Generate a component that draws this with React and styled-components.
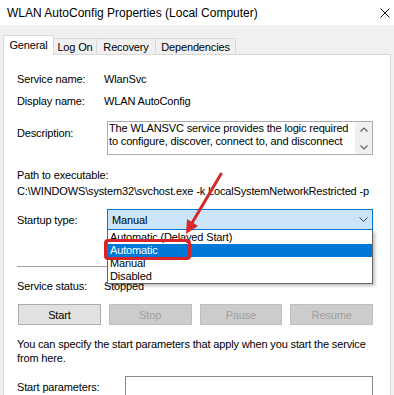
import React from "react";
import styled, { createGlobalStyle } from "styled-components";

const Global = createGlobalStyle`
  html, body { margin: 0; padding: 0; background: #f0f0f0; }
  body { font-family: "Liberation Sans", Arial, sans-serif; color: #000; }
  * { box-sizing: border-box; }
`;

const Window = styled.div`
  width: 394px;
  height: 395px;
  overflow: hidden;
  background: #f0f0f0;
  display: flex;
  flex-direction: column;
  font-size: 11px;
  letter-spacing: -0.15px;
`;

const TitleBar = styled.div`
  height: 25px;
  flex: none;
  background: #fff;
  display: flex;
  align-items: center;
  justify-content: space-between;
  padding: 0 4px 0 7px;
  font-size: 12px;
  letter-spacing: 0;
`;

const CloseBtn = styled.div`
  width: 10px;
  height: 10px;
  display: flex;
`;

const Body = styled.div`
  flex: 1;
  display: flex;
  flex-direction: column;
  padding: 10px 3px 0 3px;
`;

const TabRow = styled.div`
  display: flex;
  align-items: flex-end;
  height: 20px;
  flex: none;
`;

const Tab = styled.div`
  width: ${(p) => p.$w}px;
  height: ${(p) => (p.$active ? 20 : 16)}px;
  margin-bottom: ${(p) => (p.$active ? 0 : 1)}px;
  margin-left: ${(p) => (p.$first ? 0 : -1)}px;
  background: ${(p) => (p.$active ? "#fff" : "#f0f0f0")};
  border: 1px solid #d9d9d9;
  border-bottom: none;
  position: relative;
  z-index: ${(p) => (p.$active ? 2 : 0)};
  display: flex;
  align-items: center;
  justify-content: center;
  padding-bottom: ${(p) => (p.$active ? 2 : 0)}px;
`;

const Panel = styled.div`
  flex: 1;
  margin-top: -1px;
  background: #fff;
  border: 1px solid #d9d9d9;
  border-bottom: none;
  padding: 16px 17px 0 13px;
  display: flex;
  flex-direction: column;
`;

const Row = styled.div`
  display: flex;
  align-items: ${(p) => (p.$top ? "flex-start" : "center")};
  margin-top: ${(p) => p.$mt || 0}px;
  line-height: 16px;
`;

const Label = styled.div`
  width: ${(p) => p.$w || 87}px;
  flex: none;
  padding-top: ${(p) => p.$pt || 0}px;
`;

const Text = styled.div`
  line-height: 16px;
  margin-top: ${(p) => p.$mt || 0}px;
  white-space: nowrap;
`;

const DescBox = styled.div`
  margin-left: 3px;
  flex: 1;
  height: 34px;
  border: 1px solid #abadb3;
  display: flex;
  line-height: 13px;
`;

const DescText = styled.div`
  flex: 1;
  padding: 0 1px;
  overflow: hidden;
  white-space: nowrap;
`;

const ScrollBar = styled.div`
  width: 17px;
  background: #f0f0f0;
  display: flex;
  flex-direction: column;
  align-items: center;
  justify-content: space-between;
  padding: 5px 0 4px;
`;

const SelectWrap = styled.div`
  margin-left: 3px;
  flex: 1;
  position: relative;
  height: 21px;
`;

const Select = styled.div`
  height: 21px;
  border: 1px solid #0078d7;
  background: #cce4f7;
  display: flex;
  align-items: center;
  justify-content: space-between;
  padding: 0 4px;
`;

const List = styled.div`
  position: absolute;
  top: 100%;
  left: 0;
  right: 0;
  background: #fff;
  border: 1px solid #646464;
  border-top: none;
  padding-top: 1px;
  box-shadow: 2px 2px 3px rgba(0, 0, 0, 0.25);
  z-index: 3;
`;

const Item = styled.div`
  height: 13px;
  line-height: 13px;
  padding-left: 2px;
  background: ${(p) => (p.$sel ? "#0078d7" : "transparent")};
  color: ${(p) => (p.$sel ? "#fff" : "#000")};
  white-space: nowrap;
`;

const Highlight = styled.div`
  position: absolute;
  left: -3px;
  top: 30px;
  width: 87px;
  height: 21px;
  border: 3px solid #d8232a;
  border-radius: 4px;
  z-index: 4;
`;

const Arrow = styled.svg`
  position: absolute;
  left: 43px;
  top: -44px;
  width: 80px;
  height: 80px;
  z-index: 5;
  overflow: visible;
`;

const Separator = styled.div`
  height: 1px;
  background: #a0a0a0;
  margin-top: 36px;
`;

const ButtonRow = styled.div`
  display: flex;
  gap: 8px;
  margin-top: 10px;
  margin-left: 1px;
`;

const Button = styled.div`
  flex: 1;
  height: 21px;
  display: flex;
  align-items: center;
  justify-content: center;
  border: 1px solid ${(p) => (p.$disabled ? "#bfbfbf" : "#adadad")};
  background: ${(p) => (p.$disabled ? "#cccccc" : "#e1e1e1")};
  color: ${(p) => (p.$disabled ? "#a0a0a0" : "#000")};
`;

const Paragraph = styled.div`
  margin-top: 12px;
  line-height: 14px;
`;

const Input = styled.div`
  flex: 1;
  height: 28px;
  border: 1px solid #8a8a8a;
  align-self: flex-start;
`;

const Chevron = ({ up }) => (
  <svg width="8" height="5" viewBox="0 0 8 5">
    <path
      d={up ? "M0.5 4.5 L4 1 L7.5 4.5" : "M0.5 0.5 L4 4 L7.5 0.5"}
      fill="none"
      stroke="#606060"
      strokeWidth="1.2"
    />
  </svg>
);

export default function App() {
  return (
    <>
      <Global />
      <Window>
        <TitleBar>
          <span>WLAN AutoConfig Properties (Local Computer)</span>
          <CloseBtn>
            <svg width="10" height="10" viewBox="0 0 10 10">
              <path d="M0.5 0.5 L9.5 9.5 M9.5 0.5 L0.5 9.5" stroke="#111" strokeWidth="1" />
            </svg>
          </CloseBtn>
        </TitleBar>
        <Body>
          <TabRow>
            <Tab $active $first $w={51}>General</Tab>
            <Tab $w={44}>Log On</Tab>
            <Tab $w={60}>Recovery</Tab>
            <Tab $w={81}>Dependencies</Tab>
          </TabRow>
          <Panel>
            <Row>
              <Label>Service name:</Label>
              <span>WlanSvc</span>
            </Row>
            <Row $mt={6}>
              <Label>Display name:</Label>
              <span>WLAN AutoConfig</span>
            </Row>
            <Row $top $mt={12}>
              <Label $pt={4}>Description:</Label>
              <DescBox>
                <DescText>
                  The WLANSVC service provides the logic required
                  <br />
                  to configure, discover, connect to, and disconnect
                </DescText>
                <ScrollBar>
                  <Chevron up />
                  <Chevron />
                </ScrollBar>
              </DescBox>
            </Row>
            <Text $mt={12}>Path to executable:</Text>
            <Text>C:\WINDOWS\system32\svchost.exe -k LocalSystemNetworkRestricted -p</Text>
            <Row $mt={10}>
              <Label>Startup type:</Label>
              <SelectWrap>
                <Select>
                  <span>Manual</span>
                  <svg width="9" height="5" viewBox="0 0 9 5">
                    <path d="M0.5 0.5 L4.5 4.5 L8.5 0.5" fill="none" stroke="#444" strokeWidth="1" />
                  </svg>
                </Select>
                <List>
                  <Item>Automatic (Delayed Start)</Item>
                  <Item $sel>Automatic</Item>
                  <Item>Manual</Item>
                  <Item>Disabled</Item>
                </List>
                <Highlight />
                <Arrow viewBox="150 165 80 80">
                  <line x1="221" y1="174" x2="192" y2="223" stroke="#d42a2a" strokeWidth="3" strokeLinecap="round" />
                  <polygon points="186,234 198,226 187,219" fill="#d42a2a" />
                </Arrow>
              </SelectWrap>
            </Row>
            <Separator />
            <Row $mt={11}>
              <Label>Service status:</Label>
              <span>Stopped</span>
            </Row>
            <ButtonRow>
              <Button>Start</Button>
              <Button $disabled>Stop</Button>
              <Button $disabled>Pause</Button>
              <Button $disabled>Resume</Button>
            </ButtonRow>
            <Paragraph>
              You can specify the start parameters that apply when you start the service
              <br />
              from here.
            </Paragraph>
            <Row $top $mt={11}>
              <Label $w={108} $pt={3}>Start parameters:</Label>
              <Input />
            </Row>
          </Panel>
        </Body>
      </Window>
    </>
  );
}
